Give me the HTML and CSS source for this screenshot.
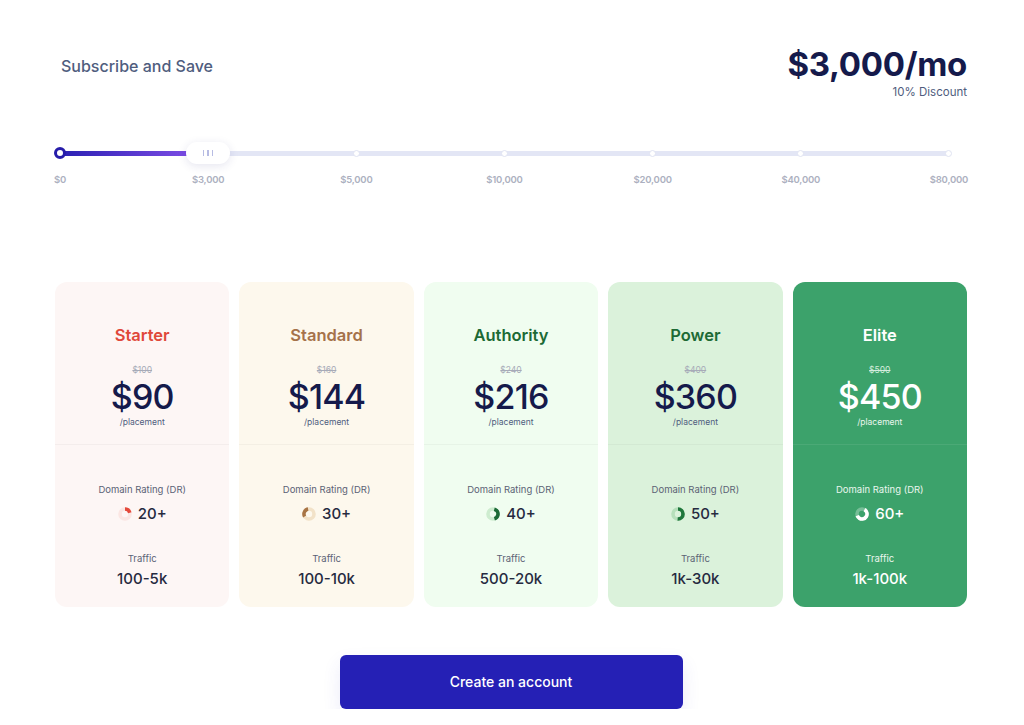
FILE: index.html
```html
<!DOCTYPE html>
<html lang="en">

<head>
  <meta charset="UTF-8">
  <meta name="viewport" content="width=device-width, initial-scale=1.0">
  <title>Subscribe and Save</title>
  <link rel="stylesheet" href="styles.css">
</head>

<body>
  <div class="page">
    <header class="top">
      <h2 class="subtitle">Subscribe and Save</h2>
      <div class="total">
        <div class="total-price">$3,000/mo</div>
        <div class="total-discount">10% Discount</div>
      </div>
    </header>

    <!-- budget slider -->
    <section class="slider">
      <div class="slider-row">
        <div class="track"></div>
        <div class="stops">
          <div class="stop"><span class="dot dot-start"></span></div>
          <div class="stop">
            <span class="thumb"><i></i><i></i><i></i></span>
          </div>
          <div class="stop"><span class="dot"></span></div>
          <div class="stop"><span class="dot"></span></div>
          <div class="stop"><span class="dot"></span></div>
          <div class="stop"><span class="dot"></span></div>
          <div class="stop"><span class="dot"></span></div>
        </div>
      </div>
      <div class="labels">
        <div class="stop"><span>$0</span></div>
        <div class="stop"><span>$3,000</span></div>
        <div class="stop"><span>$5,000</span></div>
        <div class="stop"><span>$10,000</span></div>
        <div class="stop"><span>$20,000</span></div>
        <div class="stop"><span>$40,000</span></div>
        <div class="stop"><span>$80,000</span></div>
      </div>
    </section>

    <main class="plans">
      <div class="plan plan-starter">
        <div class="plan-top">
          <h3 class="plan-name">Starter</h3>
          <div class="plan-old">$100</div>
          <div class="plan-price">$90</div>
          <div class="plan-unit">/placement</div>
        </div>
        <div class="plan-bottom">
          <div class="plan-label">Domain Rating (DR)</div>
          <div class="plan-dr">
            <svg class="ring" viewBox="0 0 14 14">
              <circle class="ring-bg" cx="7" cy="7" r="5" />
              <circle class="ring-arc" cx="7" cy="7" r="5" stroke-dasharray="6.3 31.4" transform="rotate(-90 7 7)" />
            </svg>
            <span>20+</span>
          </div>
          <div class="plan-label plan-label-traffic">Traffic</div>
          <div class="plan-traffic">100-5k</div>
        </div>
      </div>

      <div class="plan plan-standard">
        <div class="plan-top">
          <h3 class="plan-name">Standard</h3>
          <div class="plan-old">$160</div>
          <div class="plan-price">$144</div>
          <div class="plan-unit">/placement</div>
        </div>
        <div class="plan-bottom">
          <div class="plan-label">Domain Rating (DR)</div>
          <div class="plan-dr">
            <svg class="ring" viewBox="0 0 14 14">
              <circle class="ring-bg" cx="7" cy="7" r="5" />
              <circle class="ring-arc" cx="7" cy="7" r="5" stroke-dasharray="9.4 31.4" transform="rotate(150 7 7)" />
            </svg>
            <span>30+</span>
          </div>
          <div class="plan-label plan-label-traffic">Traffic</div>
          <div class="plan-traffic">100-10k</div>
        </div>
      </div>

      <div class="plan plan-authority">
        <div class="plan-top">
          <h3 class="plan-name">Authority</h3>
          <div class="plan-old">$240</div>
          <div class="plan-price">$216</div>
          <div class="plan-unit">/placement</div>
        </div>
        <div class="plan-bottom">
          <div class="plan-label">Domain Rating (DR)</div>
          <div class="plan-dr">
            <svg class="ring" viewBox="0 0 14 14">
              <circle class="ring-bg" cx="7" cy="7" r="5" />
              <circle class="ring-arc" cx="7" cy="7" r="5" stroke-dasharray="12.6 31.4" transform="rotate(-75 7 7)" />
            </svg>
            <span>40+</span>
          </div>
          <div class="plan-label plan-label-traffic">Traffic</div>
          <div class="plan-traffic">500-20k</div>
        </div>
      </div>

      <div class="plan plan-power">
        <div class="plan-top">
          <h3 class="plan-name">Power</h3>
          <div class="plan-old">$400</div>
          <div class="plan-price">$360</div>
          <div class="plan-unit">/placement</div>
        </div>
        <div class="plan-bottom">
          <div class="plan-label">Domain Rating (DR)</div>
          <div class="plan-dr">
            <svg class="ring" viewBox="0 0 14 14">
              <circle class="ring-bg" cx="7" cy="7" r="5" />
              <circle class="ring-arc" cx="7" cy="7" r="5" stroke-dasharray="15.7 31.4" transform="rotate(-90 7 7)" />
            </svg>
            <span>50+</span>
          </div>
          <div class="plan-label plan-label-traffic">Traffic</div>
          <div class="plan-traffic">1k-30k</div>
        </div>
      </div>

      <div class="plan plan-elite">
        <div class="plan-top">
          <h3 class="plan-name">Elite</h3>
          <div class="plan-old">$500</div>
          <div class="plan-price">$450</div>
          <div class="plan-unit">/placement</div>
        </div>
        <div class="plan-bottom">
          <div class="plan-label">Domain Rating (DR)</div>
          <div class="plan-dr">
            <svg class="ring" viewBox="0 0 14 14">
              <circle class="ring-bg" cx="7" cy="7" r="5" />
              <circle class="ring-arc" cx="7" cy="7" r="5" stroke-dasharray="18.8 31.4" transform="rotate(-60 7 7)" />
            </svg>
            <span>60+</span>
          </div>
          <div class="plan-label plan-label-traffic">Traffic</div>
          <div class="plan-traffic">1k-100k</div>
        </div>
      </div>
    </main>

    <div class="actions">
      <button class="cta" type="button">Create an account</button>
    </div>
  </div>
</body>

</html>
```

FILE: styles.css
```css
body {
  margin: 0;
  padding: 0;
  background-color: #fff;
  font-family: Inter, "Noto Sans", Arial, sans-serif;
  color: #151a4b;
}

.page {
  width: 912px;
  margin-left: 55px;
  padding-top: 46px;
}

/* Header */
.top {
  display: flex;
  justify-content: space-between;
  align-items: flex-start;
}

.subtitle {
  margin: 10px 0 0 6px;
  font-size: 16px;
  line-height: 20px;
  font-weight: 500;
  color: #4f5d7e;
}

.total {
  text-align: right;
}

.total-price {
  font-size: 33px;
  line-height: 36px;
  font-weight: 700;
  letter-spacing: -0.3px;
  color: #151a4b;
}

.total-discount {
  margin-top: 3px;
  font-size: 11.5px;
  line-height: 14px;
  color: #4f5d7e;
}

/* Slider */
.slider {
  margin-top: 43px;
  margin-left: 5px;
  width: 889px;
}

.slider-row {
  display: grid;
  align-items: center;
  height: 22px;
}

.track,
.stops {
  grid-area: 1 / 1;
}

.track {
  height: 5px;
  border-radius: 3px;
  background:
    linear-gradient(to right, #2a20b3, #7c4ce4) 0 0 / 130px 5px no-repeat,
    #e3e6f5;
}

.stops,
.labels {
  display: flex;
  justify-content: space-between;
}

.stop {
  width: 0;
  display: flex;
  justify-content: center;
  align-items: center;
}

.dot {
  flex: none;
  width: 5px;
  height: 5px;
  border-radius: 50%;
  background-color: #fff;
  border: 1.5px solid #e0e3f2;
}

.dot-start {
  width: 6px;
  height: 6px;
  border: 3px solid #261ca9;
}

.thumb {
  flex: none;
  width: 44px;
  height: 22px;
  border-radius: 11px;
  background-color: #fff;
  box-shadow: 0 2px 10px rgba(40, 40, 120, 0.12);
  display: flex;
  justify-content: center;
  align-items: center;
  gap: 3px;
}

.thumb i {
  width: 1.5px;
  height: 6px;
  background-color: #b7bce3;
}

.labels {
  margin-top: 10px;
}

.labels span {
  flex: none;
  font-size: 9.5px;
  line-height: 12px;
  font-weight: 600;
  letter-spacing: -0.2px;
  color: #acb0c0;
  white-space: nowrap;
}

/* Plans */
.plans {
  margin-top: 96px;
  display: grid;
  grid-template-columns: repeat(5, 1fr);
  gap: 10px;
}

.plan {
  height: 325px;
  border-radius: 12px;
  text-align: center;
  overflow: hidden;
}

.plan-top {
  box-sizing: border-box;
  height: 163px;
  padding-top: 43px;
  border-bottom: 1px solid rgba(0, 0, 0, 0.035);
}

.plan-name {
  margin: 0;
  font-size: 16.5px;
  line-height: 20px;
  font-weight: 600;
}

.plan-old {
  margin-top: 19px;
  font-size: 8.5px;
  line-height: 12px;
  color: #a7abb8;
  text-decoration: line-through;
}

.plan-price {
  margin-top: 3px;
  font-size: 34px;
  line-height: 36px;
  font-weight: 500;
  letter-spacing: -0.8px;
  color: #151a4b;
}

.plan-unit {
  margin-top: 1px;
  font-size: 8.5px;
  line-height: 12px;
  color: #4f5d7e;
}

.plan-bottom {
  padding-top: 38px;
}

.plan-label {
  font-size: 9.5px;
  line-height: 14px;
  color: #5b6275;
}

.plan-dr {
  margin-top: 7px;
  display: flex;
  justify-content: center;
  align-items: center;
  gap: 6px;
  font-size: 15px;
  line-height: 20px;
  font-weight: 500;
  color: #262a40;
}

.ring {
  width: 14px;
  height: 14px;
}

.ring circle {
  fill: none;
  stroke-width: 3.6;
}

.plan-label-traffic {
  margin-top: 28px;
}

.plan-traffic {
  margin-top: 3px;
  font-size: 15px;
  line-height: 20px;
  font-weight: 500;
  color: #262a40;
}

.plan-starter {
  background-color: #fdf6f5;
}

.plan-starter .plan-name {
  color: #e0483a;
}

.plan-starter .ring-bg {
  stroke: #fbe6e3;
}

.plan-starter .ring-arc {
  stroke: #e4493b;
}

.plan-standard {
  background-color: #fdf8ed;
}

.plan-standard .plan-name {
  color: #a5724a;
}

.plan-standard .ring-bg {
  stroke: #f2e2c8;
}

.plan-standard .ring-arc {
  stroke: #a87444;
}

.plan-authority {
  background-color: #f0fdf0;
}

.plan-authority .plan-name {
  color: #1c6a35;
}

.plan-authority .ring-bg {
  stroke: #cdeccf;
}

.plan-authority .ring-arc {
  stroke: #1d6b38;
}

.plan-power {
  background-color: #dbf2db;
}

.plan-power .plan-name {
  color: #1d6a35;
}

.plan-power .ring-bg {
  stroke: #b6dfbb;
}

.plan-power .ring-arc {
  stroke: #1f773c;
}

.plan-elite {
  background-color: #3ca26b;
}

.plan-elite .plan-top {
  border-bottom-color: rgba(255, 255, 255, 0.08);
}

.plan-elite .plan-name,
.plan-elite .plan-price,
.plan-elite .plan-dr,
.plan-elite .plan-traffic {
  color: #fff;
}

.plan-elite .plan-old {
  color: #d3ecdc;
}

.plan-elite .plan-unit,
.plan-elite .plan-label {
  color: #eaf6ee;
}

.plan-elite .ring-bg {
  stroke: rgba(255, 255, 255, 0.3);
}

.plan-elite .ring-arc {
  stroke: #fff;
}

/* Button */
.actions {
  margin-top: 48px;
  display: flex;
  justify-content: center;
}

.cta {
  width: 343px;
  height: 54px;
  padding-bottom: 3px;
  border: none;
  border-radius: 6px;
  background-color: #2520b5;
  color: #fff;
  font-family: inherit;
  font-size: 14px;
  font-weight: 500;
  box-shadow: 0 8px 18px rgba(60, 60, 200, 0.1);
  cursor: pointer;
}
```
